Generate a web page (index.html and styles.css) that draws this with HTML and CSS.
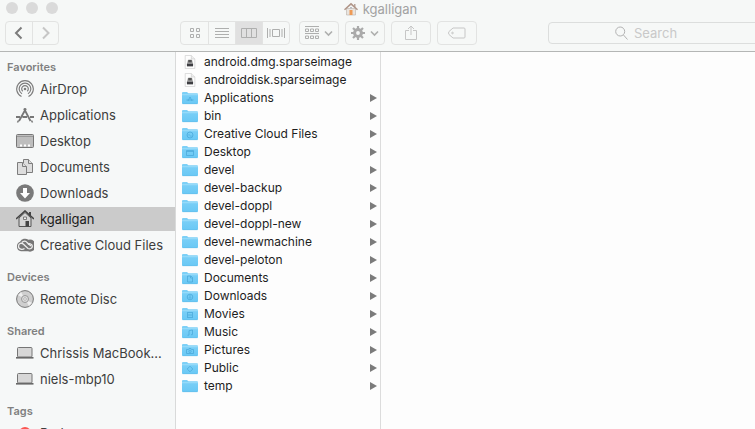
FILE: index.html
```html
<!DOCTYPE html>
<html lang="en">
<head>
<meta charset="utf-8">
<title>kgalligan</title>
<link rel="stylesheet" href="styles.css">
</head>
<body>
<svg class="defs" aria-hidden="true">
  <defs>
    <linearGradient id="blue" x1="0" y1="0" x2="0" y2="1"><stop offset="0" stop-color="#7fd1f7"/><stop offset="1" stop-color="#69c8f5"/></linearGradient>
    <symbol id="folder" viewBox="0 0 16 14"><path d="M0 2.200Q0 1 1 1h4l1.400 1.200H15q1 0 1 1V12q0 1-1 1H1q-1 0-1-1z" fill="url(#blue)" stroke="none"/><path d="M0 3.700h16" stroke="#a5e0fa" stroke-width=".8"/><path d="M.5 12.700h15" stroke="#62bce8" stroke-width=".6"/></symbol>
    <symbol id="image" viewBox="0 0 16 16"><path d="M2.500.5h7l4 4v11h-11z" fill="#fdfdfd" stroke="#cfcfcf"/><path d="M9.500.5v4h4" fill="#eee" stroke="#cfcfcf"/><g stroke="none"><path d="M5.500 6h5l1.200 4.500H4.300z" fill="#aaa"/><path d="M6 5.500h4v3H6z" fill="#555"/><path d="M4.500 10h7v3h-7z" fill="#3e3e42"/></g></symbol>
    <symbol id="laptop" viewBox="0 0 18 18"><rect x="1.500" y="3.500" width="14.500" height="9.500" rx="1" fill="#d7d7d7" stroke="#757575"/><path d="M0 13h17.500v1.600H0z" fill="#686868"/></symbol>
  </defs>
</svg>
<div class="window">
  <header class="chrome">
    <div class="titlebar">
      <div class="lights"><i></i><i></i><i></i></div>
      <h1 class="title">
        <svg width="14" height="14" viewBox="0 0 14 14"><path d="M2.500 6.500h9V13h-9z" fill="#e8e4df" stroke="#b8b0a8" stroke-width=".6"/><path d="M10 2h1.500v3H10z" fill="#b9a79d"/><path d="M0 7.300 7 .8l7 6.500-1 1L7 3 1 8.300z" fill="#b09588"/><path d="M5.500 8h3v5h-3z" fill="#ee9a55"/><path d="M6 5h2v1.500H6z" fill="#b9bcc2"/></svg>
        <span>kgalligan</span>
      </h1>
    </div>
    <div class="toolbar">
      <div class="group nav">
        <button class="dark" aria-label="Back"><svg width="24" height="20" viewBox="0 0 24 20"><path d="m14.500 4.500-5.500 5.500 5.500 5.500"/></svg></button>
        <button class="faint" aria-label="Forward"><svg width="24" height="20" viewBox="0 0 24 20"><path d="m9 4.500 5.500 5.500L9 15.500"/></svg></button>
      </div>
      <div class="group views">
        <button aria-label="Icon view"><svg width="12" height="12" viewBox="0 0 12 12"><path d="M1.500 1.500h3v3h-3zM7.500 1.500h3v3h-3zM1.500 7.500h3v3h-3zM7.500 7.500h3v3h-3z"/></svg></button>
        <button aria-label="List view"><svg width="14" height="12" viewBox="0 0 14 12"><path d="M0 1.500h14M0 4.500h14M0 7.500h14M0 10.500h14"/></svg></button>
        <button class="on" aria-label="Column view" aria-pressed="true"><svg width="16" height="12" viewBox="0 0 16 12"><path d="M.5 1.500h15v9H.5zM5.500 1.500v9M10.500 1.500v9"/></svg></button>
        <button aria-label="Cover view"><svg width="18" height="12" viewBox="0 0 18 12"><path d="M.5 1v10M3 2v8M5.500 2.500h7v7h-7zM15 2v8M17.500 1v10"/></svg></button>
      </div>
      <div class="group"><button class="wide" aria-label="Arrange"><svg width="28" height="14" viewBox="0 0 28 14"><path d="M0 .5h14M0 7.500h14M.5 3h3v2.500h-3zM5.500 3h3v2.500h-3zM10.500 3h3v2.500h-3zM.5 10h3v2.500h-3zM5.500 10h3v2.500h-3zM10.500 10h3v2.500h-3z"/><path d="m20 5.500 3.500 3.500L27 5.500" stroke-width="1.600"/></svg></button></div>
      <div class="group"><button class="wide" aria-label="Action"><svg width="28" height="14" viewBox="0 0 28 14"><circle cx="7" cy="7" r="3.400" stroke-width="3" stroke="#aaa"/><path d="M7 0v3M7 11v3M0 7h3M11 7h3M2 2l2 2M10 10l2 2M2 12l2-2M10 4l2-2" stroke-width="2.200" stroke="#aaa"/><path d="m20 5.500 3.500 3.500L27 5.500" stroke-width="1.600"/></svg></button></div>
      <div class="group"><button class="wide faint" aria-label="Share"><svg width="12" height="16" viewBox="0 0 12 16"><path d="M4 5.500H.5v9h11v-9H8M6 10V1M3 4l3-3 3 3"/></svg></button></div>
      <div class="group"><button class="wide faint" aria-label="Edit tags"><svg width="18" height="12" viewBox="0 0 18 12"><path d="M5 1h11q1 0 1 1v8q0 1-1 1H5L1 7.500Q0 6 1 4.500z"/><circle cx="4.500" cy="6" r=".8"/></svg></button></div>
      <label class="search">
        <svg width="13" height="14" viewBox="0 0 13 14"><circle cx="5.200" cy="5.500" r="4.500"/><path d="m8.500 9 4 4.500"/></svg>
        <input type="search" placeholder="Search" aria-label="Search">
      </label>
    </div>
  </header>
  <div class="body">
    <nav class="sidebar">
      <section>
        <h2>Favorites</h2>
        <a href="#"><svg viewBox="0 0 18 18"><g fill="none" stroke="#7d7d7d" stroke-width="1.200"><path d="M5.500 16.500a8.300 8.300 0 1 1 7 0M6 13.800a5.800 5.800 0 1 1 6 0M6.800 11.300a3.300 3.300 0 1 1 4.400 0"/></g><circle cx="9" cy="9" r="1.300" fill="#7d7d7d"/></svg><span>AirDrop</span></a>
        <a href="#"><svg viewBox="0 0 18 18"><g fill="none" stroke="#777" stroke-width="1.800"><path d="M8 2.500 14.500 15M10 2.500 3 15M0 11h4M6.500 11H11M14 11h4"/><path d="m1.500 16.500 1-2M16.500 16.500l-1-2" stroke-width="1.500"/></g></svg><span>Applications</span></a>
        <a href="#"><svg viewBox="0 0 18 18"><rect x=".5" y="2.500" width="17" height="13" rx="1" fill="#bebebe" stroke="#777"/><path d="M1 4.500h16" stroke="#999"/><path d="M4 13.500h2M8 13.500h2M12 13.500h2" stroke="#fff" stroke-width="2"/></svg><span>Desktop</span></a>
        <a href="#"><svg viewBox="0 0 18 18"><g fill="#ddd" stroke="#7d7d7d"><path d="M7.500 1.500h5l4 4v9h-9z"/><path d="M12.500 1.500v4h4"/><path d="M1.500 4.500h5l4 4v8h-9z"/><path d="M6.500 4.500v4h4"/></g></svg><span>Documents</span></a>
        <a href="#"><svg viewBox="0 0 18 18"><circle cx="9" cy="9" r="8.800" fill="#7a7a7a"/><path d="M7 4h4v5h3l-5 5.500L4 9h3z" fill="#fff"/></svg><span>Downloads</span></a>
        <a href="#" class="selected" aria-current="page"><svg viewBox="0 0 18 18"><path d="M3 8 9 2.500 15 8v8.500H3z" fill="#d5d5d5" stroke="#555"/><path d="M0 9 9 1l9 8" fill="none" stroke="#444" stroke-width="1.600"/><path d="M13 2h2v5l-2-2z" fill="#444"/><path d="M7.500 7h3v2.500h-3z" fill="#eee" stroke="#666" stroke-width=".8"/><path d="M9.500 11H13v5.500H9.500z" fill="#444"/></svg><span>kgalligan</span></a>
        <a href="#"><svg viewBox="0 0 18 18"><path d="M5 15.300a5 5 0 0 1-1-9.500 5.800 5.800 0 0 1 8.500-2A6 6 0 1 1 12 15.300z" fill="#777"/><g fill="none" stroke="#eee" stroke-width="1.300"><path d="M8.500 12.500c-2 1.500-6 1-6-2.300s3.500-3.500 5-2L12 12.500c2 1 4.300-.2 4.300-2.300S13.500 7 12 8.500"/><path d="M6 6.500c1.500-2 4-1.500 5 0l4 3.500"/></g></svg><span>Creative Cloud Files</span></a>
      </section>
      <section>
        <h2>Devices</h2>
        <a href="#"><svg viewBox="0 0 18 18"><circle cx="9" cy="9" r="8.400" fill="#cfcfcf" stroke="#777"/><path d="M9 9 2 5l3-3zM9 9l7 4-3 3z" fill="#eee"/><circle cx="9" cy="9" r="3.500" fill="#ddd" stroke="#999"/><circle cx="9" cy="9" r="1.300" fill="#fff" stroke="#999" stroke-width=".7"/></svg><span>Remote Disc</span></a>
      </section>
      <section>
        <h2>Shared</h2>
        <a href="#"><svg><use href="#laptop"/></svg><span>Chrissis MacBook…</span></a>
        <a href="#"><svg><use href="#laptop"/></svg><span>niels-mbp10</span></a>
      </section>
      <section>
        <h2>Tags</h2>
        <a href="#"><svg viewBox="0 0 18 18"><circle cx="9" cy="9" r="6" fill="#fb5550"/></svg><span>Red</span></a>
      </section>
    </nav>
    <ul class="column">
      <li><svg><use href="#image"/></svg><span>android.dmg.sparseimage</span></li>
      <li><svg><use href="#image"/></svg><span>androiddisk.sparseimage</span></li>
      <li class="dir"><svg viewBox="0 0 16 14"><use href="#folder"/><path d="m6 10 2-4 2 4M4.500 9h7"/></svg><span>Applications</span></li>
      <li class="dir"><svg viewBox="0 0 16 14"><use href="#folder"/></svg><span>bin</span></li>
      <li class="dir"><svg viewBox="0 0 16 14"><use href="#folder"/><circle cx="8" cy="8" r="3"/><path d="M6 8.500q1-2 2 0t2 0"/></svg><span>Creative Cloud Files</span></li>
      <li class="dir"><svg viewBox="0 0 16 14"><use href="#folder"/><path d="M4.500 5.500h7v5h-7zM4.500 6.500h7"/></svg><span>Desktop</span></li>
      <li class="dir"><svg viewBox="0 0 16 14"><use href="#folder"/></svg><span>devel</span></li>
      <li class="dir"><svg viewBox="0 0 16 14"><use href="#folder"/></svg><span>devel-backup</span></li>
      <li class="dir"><svg viewBox="0 0 16 14"><use href="#folder"/></svg><span>devel-doppl</span></li>
      <li class="dir"><svg viewBox="0 0 16 14"><use href="#folder"/></svg><span>devel-doppl-new</span></li>
      <li class="dir"><svg viewBox="0 0 16 14"><use href="#folder"/></svg><span>devel-newmachine</span></li>
      <li class="dir"><svg viewBox="0 0 16 14"><use href="#folder"/></svg><span>devel-peloton</span></li>
      <li class="dir"><svg viewBox="0 0 16 14"><use href="#folder"/><path d="M5.500 5H9l1.500 1.500V11h-5zM8.500 5v2h2"/></svg><span>Documents</span></li>
      <li class="dir"><svg viewBox="0 0 16 14"><use href="#folder"/><circle cx="8" cy="8" r="2.800"/><path d="M8 6v3M7 8.500l1 1 1-1"/></svg><span>Downloads</span></li>
      <li class="dir"><svg viewBox="0 0 16 14"><use href="#folder"/><path d="M5.500 5v6M10.500 5v6M6 5.500h4M6 8h4M6 10.500h4"/></svg><span>Movies</span></li>
      <li class="dir"><svg viewBox="0 0 16 14"><use href="#folder"/><path d="M7 10V5.700l3.500-.7v4.500M5.500 10.200H7M9 9.700h1.500"/></svg><span>Music</span></li>
      <li class="dir"><svg viewBox="0 0 16 14"><use href="#folder"/><path d="M4.500 6.500h2L7 5.500h2l.500 1h2v4h-7z"/><circle cx="8" cy="8.300" r="1.200"/></svg><span>Pictures</span></li>
      <li class="dir"><svg viewBox="0 0 16 14"><use href="#folder"/><path d="m8 5.200 2.800 2.800L8 10.800 5.200 8z"/></svg><span>Public</span></li>
      <li class="dir"><svg viewBox="0 0 16 14"><use href="#folder"/></svg><span>temp</span></li>
    </ul>
    <main class="preview"></main>
  </div>
</div>
</body>
</html>
```
FILE: styles.css
```css
* { box-sizing: border-box; }

body {
  margin: 0;
  overflow: hidden;
  font: 13px/18px Inter, "Open Sans", sans-serif;
  color: #3d3d3d;
}

.defs { position: absolute; width: 0; height: 0; }

.window {
  display: flex;
  flex-direction: column;
  height: 100vh;
  overflow: hidden;
  background: #fdfdfd;
}

/* Title bar and toolbar */
.chrome {
  flex: none;
  background: #f6f8f7;
  border-bottom: 1px solid #b4b6b5;
  padding-bottom: 6px;
}

.titlebar {
  display: grid;
  grid-template-columns: 1fr auto 1fr;
  align-items: center;
  height: 18px;
  padding-left: 6px;
}

.lights { display: flex; gap: 8px; height: 14px; }
.lights i { width: 12px; height: 12px; border-radius: 50%; background: #dadada; }

.title {
  display: flex;
  align-items: center;
  gap: 5px;
  margin: 0;
  font-size: 13px;
  font-weight: 400;
  color: #a2a2a2;
}

.toolbar { display: flex; gap: 6px; padding: 3px 0 0 5px; }

.group {
  display: flex;
  flex: none;
  height: 24px;
  border: 1px solid #e2e3e2;
  border-radius: 4px;
  overflow: hidden;
}

.nav { margin-right: 115px; }
.views { margin-right: 3px; }

.group button {
  display: flex;
  align-items: center;
  justify-content: center;
  width: 27px;
  padding: 0;
  border: 0;
  background: none;
  color: #aeafae;
}

.nav button:first-child { width: 26px; }
.nav button:last-child { width: 26px; }
.group button + button { border-left: 1px solid #e2e3e2; }
.group .wide { width: 38px; }
.group .on { background: #e0e0e0; }
.group .dark { color: #7c7c7c; }
.group .faint { color: #c6c6c6; }
.toolbar svg { flex: none; fill: none; stroke: currentColor; }
.nav svg { stroke-width: 2; }

.search {
  display: flex;
  flex: 1;
  align-items: center;
  gap: 6px;
  height: 22px;
  margin: 1px -16px 0 65px;
  padding-left: 66px;
  border: 1px solid #dcdedd;
  border-radius: 4px;
  color: #b2b2b2;
}

.search input {
  flex: 1;
  min-width: 0;
  padding: 0;
  border: 0;
  outline: 0;
  background: none;
  font: inherit;
}

.search input::placeholder { color: #c9c9c9; }

/* Sidebar */
.body { display: flex; flex: 1; min-height: 0; }

.sidebar {
  flex: none;
  width: 176px;
  padding-top: 6px;
  overflow: hidden;
  background: #f6f8f8;
  border-right: 1px solid #d9dada;
}

.sidebar section { margin-bottom: 11px; }

.sidebar h2 {
  margin: 0;
  padding-left: 7px;
  font-size: 11px;
  line-height: 18px;
  font-weight: 600;
  color: #808080;
}

.sidebar a {
  display: flex;
  align-items: center;
  gap: 6px;
  height: 24px;
  margin: 1px 0 2px;
  padding-left: 16px;
  color: inherit;
  text-decoration: none;
  white-space: nowrap;
}

.sidebar a + a { margin-top: 0; }
.sidebar .selected { background: #cbcbcb; color: #1c1c1c; }
.sidebar svg { flex: none; width: 18px; height: 18px; }

/* File column */
.column {
  flex: none;
  width: 205px;
  margin: 0;
  padding: 1px 3px 0 6px;
  list-style: none;
  border-right: 1px solid #dcdcdc;
  font-size: 12px;
  color: #1e1e1e;
}

.column li { display: flex; align-items: center; gap: 6px; height: 18px; }
.column li span { flex: 1; }
.column svg { flex: none; width: 16px; height: 14px; fill: none; stroke: #4ba9da; stroke-width: .8; }

.dir::after {
  content: "";
  border: solid transparent;
  border-width: 4px 0 4px 7px;
  border-left-color: #7b7b7b;
}

.preview { flex: 1; }
```
